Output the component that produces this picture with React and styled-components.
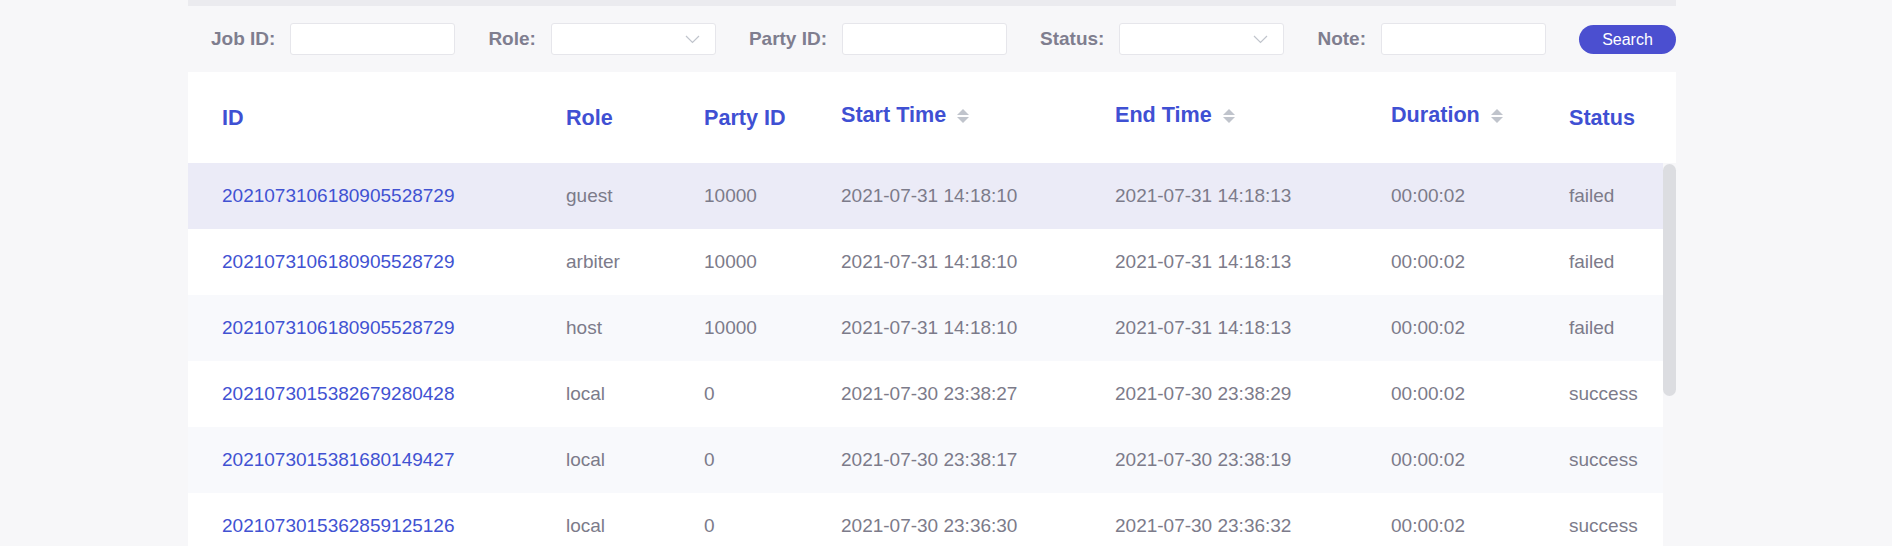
import React from 'react';
import styled, { createGlobalStyle } from 'styled-components';

const jobs = [
    { id: '2021073106180905528729', role: 'guest', party: '10000', start: '2021-07-31 14:18:10', end: '2021-07-31 14:18:13', duration: '00:00:02', status: 'failed' },
    { id: '2021073106180905528729', role: 'arbiter', party: '10000', start: '2021-07-31 14:18:10', end: '2021-07-31 14:18:13', duration: '00:00:02', status: 'failed' },
    { id: '2021073106180905528729', role: 'host', party: '10000', start: '2021-07-31 14:18:10', end: '2021-07-31 14:18:13', duration: '00:00:02', status: 'failed' },
    { id: '2021073015382679280428', role: 'local', party: '0', start: '2021-07-30 23:38:27', end: '2021-07-30 23:38:29', duration: '00:00:02', status: 'success' },
    { id: '2021073015381680149427', role: 'local', party: '0', start: '2021-07-30 23:38:17', end: '2021-07-30 23:38:19', duration: '00:00:02', status: 'success' },
    { id: '2021073015362859125126', role: 'local', party: '0', start: '2021-07-30 23:36:30', end: '2021-07-30 23:36:32', duration: '00:00:02', status: 'success' },
];

const columns = [
    { key: 'id', title: 'ID' },
    { key: 'role', title: 'Role' },
    { key: 'party', title: 'Party ID' },
    { key: 'start', title: 'Start Time', sortable: true },
    { key: 'end', title: 'End Time', sortable: true },
    { key: 'duration', title: 'Duration', sortable: true },
    { key: 'status', title: 'Status' },
];

function SortCaret(){
    return (
        <svg width="14" height="16" viewBox="0 0 14 16">
            <path d="M1 7 L7 1 L13 7 Z" fill="#c0c4cc" />
            <path d="M1 9 L7 15 L13 9 Z" fill="#c0c4cc" />
        </svg>
    )
}

function Chevron(){
    return (
        <svg width="15" height="9" viewBox="0 0 15 9">
            <polyline points="1,1 7.5,7.5 14,1" fill="none" stroke="#c0c4cc" strokeWidth="1.2" />
        </svg>
    )
}

export default function App(){
    return(
        <Page>
            <GlobalStyle />
            <Panel>
                <TopStrip />
                <FilterBar>
                    <Field>
                        <Label>Job ID:</Label>
                        <Input type='text' />
                    </Field>
                    <Field>
                        <Label>Role:</Label>
                        <Select><Chevron /></Select>
                    </Field>
                    <Field>
                        <Label>Party ID:</Label>
                        <Input type='text' />
                    </Field>
                    <Field>
                        <Label>Status:</Label>
                        <Select><Chevron /></Select>
                    </Field>
                    <Field>
                        <Label>Note:</Label>
                        <Input type='text' />
                    </Field>
                    <SearchButton>Search</SearchButton>
                </FilterBar>

                <HeaderRow>
                    {columns.map(col => (
                        <HeaderCell key={col.key} $sortable={col.sortable}>
                            {col.title}
                            {col.sortable && <CaretWrap><SortCaret /></CaretWrap>}
                        </HeaderCell>
                    ))}
                </HeaderRow>

                <Body>
                    <Rows>
                        {jobs.map((job, i) => (
                            <Row key={i} $variant={i === 0 ? 'active' : i % 2 === 0 ? 'stripe' : 'plain'}>
                                {columns.map(col => (
                                    <Cell key={col.key} $link={col.key === 'id'}>{job[col.key]}</Cell>
                                ))}
                            </Row>
                        ))}
                    </Rows>
                    <ScrollTrack>
                        <ScrollThumb />
                    </ScrollTrack>
                </Body>
            </Panel>
        </Page>
    )
}

const GlobalStyle = createGlobalStyle`
    body {
        margin: 0;
        background: #f7f7f9;
        font-family: "Liberation Sans", Arial, sans-serif;
    }
`;

//containers
const Page = styled.div`
    width: 100%;
    height: 546px;
    overflow: hidden;
    padding-left: 188px;
    box-sizing: border-box;
`;

const Panel = styled.div`
    width: 1488px;
    display: flex;
    flex-direction: column;
`;

const TopStrip = styled.div`
    height: 6px;
    background: #ebebef;
`;

// filter bar
const FilterBar = styled.div`
    display: flex;
    align-items: center;
    gap: 33px;
    height: 66px;
    padding-left: 23px;
    background: #f7f7f9;
    white-space: nowrap;
`;

const Field = styled.div`
    display: flex;
    align-items: center;
    flex-shrink: 0;
    gap: 15px;
`;

const Label = styled.span`
    flex-shrink: 0;
    font-size: 19px;
    font-weight: 700;
    color: #7f7e8f;
`;

const Input = styled.input`
    flex-shrink: 0;
    width: 165px;
    height: 32px;
    box-sizing: border-box;
    border: 1px solid #e6e6eb;
    border-radius: 3px;
    background: #fff;
    outline: none;
`;

const Select = styled.div`
    flex-shrink: 0;
    width: 165px;
    height: 32px;
    box-sizing: border-box;
    display: flex;
    align-items: center;
    justify-content: flex-end;
    padding: 1px 15px 0 0;
    border: 1px solid #e6e6eb;
    border-radius: 3px;
    background: #fff;
`;

const SearchButton = styled.button`
    flex-shrink: 0;
    width: 97px;
    height: 29px;
    margin-top: 1px;
    border: none;
    border-radius: 15px;
    background: #4b4fd0;
    color: #fff;
    font-family: "Liberation Sans", Arial, sans-serif;
    font-size: 16px;
    padding: 0;
`;

// table
const grid = `
    display: grid;
    grid-template-columns: 344px 138px 137px 274px 276px 178px 1fr;
`;

const HeaderRow = styled.div`
    ${grid}
    height: 91px;
    background: #fff;
`;

const HeaderCell = styled.div`
    display: flex;
    align-items: center;
    padding-left: 34px;
    padding-bottom: ${p => p.$sortable ? '5px' : '0'};
    font-size: 21.6px;
    font-weight: 700;
    color: #3f50d3;
`;

const CaretWrap = styled.span`
    display: flex;
    margin-left: 10px;
    margin-top: 2px;
`;

const Body = styled.div`
    display: flex;
`;

const Rows = styled.div`
    flex: 1;
`;

const rowColors = {
    active: '#ebebf7',
    stripe: '#f8f9fc',
    plain: '#ffffff',
};

const Row = styled.div`
    ${grid}
    height: 66px;
    align-items: center;
    background: ${p => rowColors[p.$variant]};
`;

const Cell = styled.div`
    padding-left: 34px;
    font-size: 19px;
    color: ${p => p.$link ? '#4152d2' : '#7c7b8a'};
    white-space: nowrap;
`;

const ScrollTrack = styled.div`
    width: 13px;
    padding-top: 1px;
    background: #f7f7f9;
`;

const ScrollThumb = styled.div`
    width: 13px;
    height: 232px;
    border-radius: 7px;
    background: #dcdde1;
`;
